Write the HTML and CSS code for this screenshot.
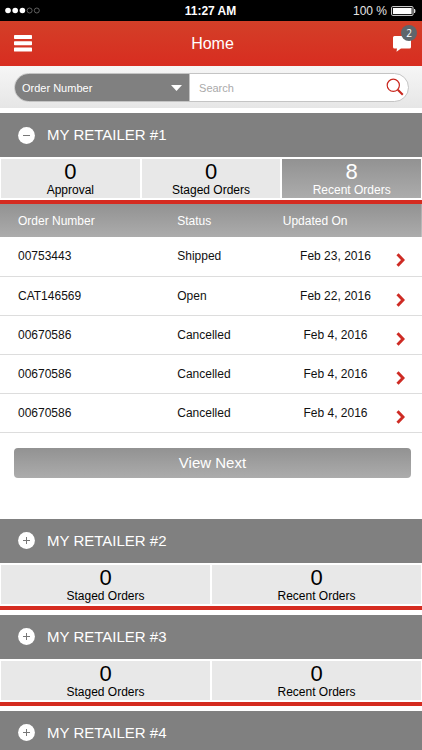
FILE: index.html
```html
<!DOCTYPE html>
<html lang="en">
<head>
<meta charset="utf-8">
<meta name="viewport" content="width=device-width, initial-scale=1">
<title>Home</title>
<link rel="stylesheet" href="styles.css">
</head>
<body>
<div class="status-bar">
  <svg class="signal" width="36" height="7" viewBox="0 0 36 7" aria-hidden="true">
    <g fill="#fff"><circle cx="3" cy="3.5" r="2.8"/><circle cx="10.2" cy="3.5" r="2.8"/><circle cx="17.4" cy="3.5" r="2.8"/></g>
    <g fill="none" stroke="#777" stroke-width=".8"><circle cx="24.6" cy="3.5" r="2.5"/><circle cx="31.8" cy="3.5" r="2.5"/></g>
  </svg>
  <span class="clock">11:27 AM</span>
  <span class="battery">100 %
    <svg width="25" height="10" viewBox="0 0 25 10" aria-hidden="true">
      <rect x=".6" y=".6" width="21.4" height="8.8" rx="1" fill="none" stroke="#ddd" stroke-width="1"/>
      <rect x="2" y="2" width="18.6" height="6" fill="#fff"/>
      <path d="M23 3h1q1 2 0 4h-1z" fill="#ddd"/>
    </svg>
  </span>
</div>

<header class="app-header">
  <button class="icon-button" type="button" aria-label="Menu">
    <svg width="18" height="17" viewBox="0 0 18 17" fill="#fff"><rect width="18" height="4" rx=".7"/><rect y="6.3" width="18" height="4" rx=".7"/><rect y="12.6" width="18" height="4" rx=".7"/></svg>
  </button>
  <h1 class="title">Home</h1>
  <button class="icon-button messages" type="button" aria-label="Messages">
    <svg width="18" height="16" viewBox="0 0 18 16"><path d="M1.5 0h15Q18 0 18 1.500v9.500q0 1.500-1.500 1.500H8L3.500 15.700 4 12.500H1.500Q0 12.500 0 11V1.500Q0 0 1.500 0z" fill="#fff"/></svg>
    <span class="badge">2</span>
  </button>
</header>

<form class="search-bar">
  <div class="search-pill">
    <div class="select-wrap">
      <select class="field-select" aria-label="Search field"><option>Order Number</option></select>
      <svg class="caret" width="11" height="6" viewBox="0 0 11 6" aria-hidden="true"><path d="M0 0h11L5.500 6z" fill="#fff"/></svg>
    </div>
    <input class="search-input" type="search" placeholder="Search" aria-label="Search">
    <button class="icon-button" type="submit" aria-label="Search">
      <svg width="18" height="20" viewBox="0 0 18 20" fill="none" stroke="#c9281f"><circle cx="7.300" cy="7.300" r="6.100" stroke-width="1.200"/><path d="M11.800 11.800 16.800 16.800" stroke-width="2"/></svg>
    </button>
  </div>
</form>

<main>
  <section class="retailer retailer-open">
    <h2><button class="retailer-header" type="button" aria-expanded="true">
      <svg width="17" height="17" viewBox="0 0 17 17" aria-hidden="true"><circle cx="8.500" cy="8.500" r="8.400" fill="#fff"/><path d="M5 8.500h7" stroke="#777"/></svg>
      MY RETAILER #1</button></h2>
    <div class="tabs">
      <button class="tab" type="button"><span class="count">0</span>Approval</button>
      <button class="tab" type="button"><span class="count">0</span>Staged Orders</button>
      <button class="tab tab-active" type="button"><span class="count">8</span>Recent Orders</button>
    </div>
    <table class="orders">
      <colgroup><col class="col-number"><col class="col-status"><col class="col-date"><col></colgroup>
      <thead><tr><th>Order Number</th><th>Status</th><th>Updated On</th><td></td></tr></thead>
      <tbody>
        <tr><td>00753443</td><td>Shipped</td><td class="date">Feb 23, 2016</td><td><a class="open" href="#" aria-label="Open order 00753443"><svg width="9" height="14" viewBox="0 0 9 14"><path d="M1.500 1.300 7 7 1.500 12.700"/></svg></a></td></tr>
        <tr><td>CAT146569</td><td>Open</td><td class="date">Feb 22, 2016</td><td><a class="open" href="#" aria-label="Open order CAT146569"><svg width="9" height="14" viewBox="0 0 9 14"><path d="M1.500 1.300 7 7 1.500 12.700"/></svg></a></td></tr>
        <tr><td>00670586</td><td>Cancelled</td><td class="date">Feb 4, 2016</td><td><a class="open" href="#" aria-label="Open order 00670586"><svg width="9" height="14" viewBox="0 0 9 14"><path d="M1.500 1.300 7 7 1.500 12.700"/></svg></a></td></tr>
        <tr><td>00670586</td><td>Cancelled</td><td class="date">Feb 4, 2016</td><td><a class="open" href="#" aria-label="Open order 00670586"><svg width="9" height="14" viewBox="0 0 9 14"><path d="M1.500 1.300 7 7 1.500 12.700"/></svg></a></td></tr>
        <tr><td>00670586</td><td>Cancelled</td><td class="date">Feb 4, 2016</td><td><a class="open" href="#" aria-label="Open order 00670586"><svg width="9" height="14" viewBox="0 0 9 14"><path d="M1.500 1.300 7 7 1.500 12.700"/></svg></a></td></tr>
      </tbody>
    </table>
    <div class="more"><button class="view-next" type="button">View Next</button></div>
  </section>

  <section class="retailer">
    <h2><button class="retailer-header" type="button" aria-expanded="false">
      <svg width="17" height="17" viewBox="0 0 17 17" aria-hidden="true"><circle cx="8.500" cy="8.500" r="8.400" fill="#fff"/><path d="M5 8.500h7M8.500 5v7" stroke="#777"/></svg>
      MY RETAILER #2</button></h2>
    <div class="tabs">
      <button class="tab" type="button"><span class="count">0</span>Staged Orders</button>
      <button class="tab" type="button"><span class="count">0</span>Recent Orders</button>
    </div>
  </section>

  <section class="retailer">
    <h2><button class="retailer-header" type="button" aria-expanded="false">
      <svg width="17" height="17" viewBox="0 0 17 17" aria-hidden="true"><circle cx="8.500" cy="8.500" r="8.400" fill="#fff"/><path d="M5 8.500h7M8.500 5v7" stroke="#777"/></svg>
      MY RETAILER #3</button></h2>
    <div class="tabs">
      <button class="tab" type="button"><span class="count">0</span>Staged Orders</button>
      <button class="tab" type="button"><span class="count">0</span>Recent Orders</button>
    </div>
  </section>

  <section class="retailer">
    <h2><button class="retailer-header" type="button" aria-expanded="false">
      <svg width="17" height="17" viewBox="0 0 17 17" aria-hidden="true"><circle cx="8.500" cy="8.500" r="8.400" fill="#fff"/><path d="M5 8.500h7M8.500 5v7" stroke="#777"/></svg>
      MY RETAILER #4</button></h2>
  </section>
</main>
</body>
</html>
```
FILE: styles.css
```css
* {
  box-sizing: border-box;
}

html {
  scrollbar-width: none;
}

body {
  margin: 0;
  background: #fff;
  color: #111;
  font: 12px/14px "Liberation Sans", Arial, sans-serif;
}

h1,
h2 {
  margin: 0;
  font-weight: normal;
}

button,
input,
select {
  margin: 0;
  padding: 0;
  border: 0;
  border-radius: 0;
  background: none;
  color: inherit;
  font: inherit;
}

svg {
  display: block;
  flex: none;
}

.status-bar {
  display: grid;
  grid-template-columns: 1fr auto 1fr;
  align-items: center;
  height: 21px;
  padding: 0 6px 0 5px;
  background: #000;
  color: #e4e4e4;
}

.clock {
  color: #fff;
  font-weight: bold;
}

.battery {
  display: flex;
  align-items: center;
  justify-content: flex-end;
  gap: 4px;
}

.app-header {
  display: flex;
  align-items: center;
  justify-content: space-between;
  height: 45px;
  padding: 0 11px 0 14px;
  background: linear-gradient(#d33f28, #d82d20);
  color: #fff;
}

.title {
  font-size: 16px;
  line-height: 20px;
}

.icon-button {
  display: block;
  flex: none;
}

.messages {
  position: relative;
}

.badge {
  position: absolute;
  top: -11px;
  right: -6px;
  width: 16px;
  height: 16px;
  border-radius: 50%;
  background: #5e666c;
  font: 10px/16px "Open Sans", sans-serif;
  text-align: center;
}

.search-bar {
  padding: 7px 13px 6px 14px;
  background: linear-gradient(#f6f6f6, #e6e6e6);
}

.search-pill {
  display: flex;
  align-items: center;
  height: 29px;
  padding-right: 4px;
  overflow: hidden;
  border: 1px solid #c4c4c4;
  border-radius: 15px;
  background: #fff;
  font-size: 11px;
}

.select-wrap {
  display: grid;
  align-items: center;
  width: 45%;
  height: 100%;
  border-right: 1px solid #c4c4c4;
  background: #808080;
  color: #fff;
}

.field-select,
.caret {
  grid-area: 1 / 1;
}

.field-select {
  width: 100%;
  height: 100%;
  padding: 0 24px 0 7px;
  appearance: none;
}

.caret {
  justify-self: end;
  margin-right: 7px;
  pointer-events: none;
}

.search-input {
  flex: 1;
  min-width: 0;
  padding: 0 9px;
  appearance: none;
}

.search-input::placeholder {
  color: #aaa;
}

main {
  display: grid;
  gap: 5px;
  padding-top: 5px;
}

.retailer-header {
  display: flex;
  align-items: center;
  gap: 12px;
  width: 100%;
  height: 44px;
  padding: 0 18px;
  background: #808080;
  color: #fff;
  font-size: 15px;
}

.tabs {
  display: flex;
  gap: 2px;
  padding: 2px 1px;
  border-bottom: 4px solid #d52b20;
}

.tab {
  display: flex;
  flex: 1;
  flex-direction: column;
  align-items: center;
  height: 39px;
  padding-top: 2px;
  background: #e8e8e8;
  color: #000;
}

.count {
  font-size: 22px;
  line-height: 22px;
}

.tab-active,
.orders thead,
.view-next {
  background: linear-gradient(#929292, #acacac);
  color: #fff;
}

.orders {
  width: 100%;
  border-collapse: collapse;
  table-layout: fixed;
}

.col-number {
  width: 42%;
}

.col-status {
  width: 25%;
}

.col-date {
  width: 25%;
}

.orders th,
.orders td {
  padding: 0;
  font-weight: normal;
  text-align: left;
}

.orders th {
  height: 33px;
}

.orders th:first-child,
.orders td:first-child {
  padding-left: 18px;
}

.orders tbody td {
  height: 39px;
  border-bottom: 1px solid #ddd;
}

.orders .date {
  text-align: center;
}

.open {
  display: block;
  padding: 8px 0 0 8px;
}

.open path {
  fill: none;
  stroke: #ce2b24;
  stroke-width: 3;
}

.more {
  padding: 15px 11px 36px 14px;
}

.view-next {
  width: 100%;
  height: 30px;
  border-radius: 4px;
  font-size: 15px;
}
```
